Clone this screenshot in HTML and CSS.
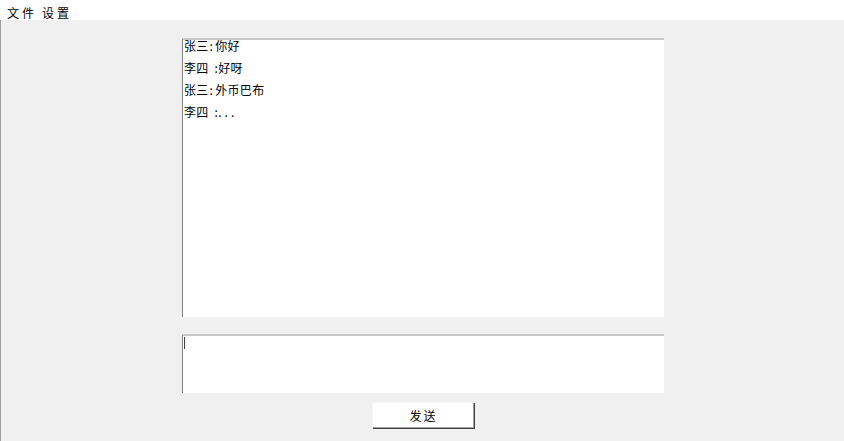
FILE: index.html
```html
<!DOCTYPE html>
<html lang="zh-CN">
<head>
    <meta charset="UTF-8">
    <meta name="viewport" content="width=device-width, initial-scale=1.0">
    <title>聊天</title>
    <link rel="stylesheet" href="styles.css">
</head>
<body>
    <div class="menubar">
        <span class="menu-item">文件</span>
        <span class="menu-item">设置</span>
    </div>
    <div class="window">
        <div class="chat-log">
            <div class="line">张三<span class="colon">:</span>你好</div>
            <div class="line">李四&nbsp; :好呀</div>
            <div class="line">张三<span class="colon">:</span>外币巴布</div>
            <div class="line">李四&nbsp; :<span class="dots">...</span></div>
        </div>
        <div class="chat-input"><span class="caret"></span></div>
        <button class="send-btn">发送</button>
    </div>
</body>
</html>
```

FILE: styles.css
```css
html, body {
    margin: 0;
    height: 100%;
}
body {
    font-family: "Noto Sans CJK SC", "Liberation Sans", sans-serif;
    font-size: 12px;
    color: #000;
    background-color: #f0f0f0;
    display: flex;
    flex-direction: column;
}
.menubar {
    height: 20px;
    background: #fff;
    display: flex;
    align-items: center;
    gap: 5px;
    padding-left: 7px;
    padding-top: 6px;
    box-sizing: border-box;
}
.menu-item {
    letter-spacing: 3px;
    line-height: 12px;
}
.window {
    flex: 1;
    border-left: 1px solid #a0a0a0;
    display: flex;
    flex-direction: column;
    align-items: center;
    padding-top: 18px;
    padding-left: 1px;
}
.chat-log {
    width: 480px;
    height: 277px;
    background: #fff;
    border-top: 2px solid #c8c8c8;
    border-left: 1px solid #828282;
    display: flex;
    flex-direction: column;
    gap: 10px;
    padding-left: 1px;
    box-sizing: content-box;
}
.line {
    line-height: 12px;
    letter-spacing: 0.3px;
}
.colon {
    padding: 0 2px 0 1px;
}
.dots {
    letter-spacing: 3px;
}
.chat-input {
    width: 480px;
    height: 56px;
    margin-top: 17px;
    background: #fff;
    border-top: 2px solid #c8c8c8;
    border-left: 1px solid #828282;
    padding-left: 1px;
    padding-top: 1px;
    box-sizing: content-box;
}
.caret {
    display: block;
    width: 1px;
    height: 12px;
    background: #404040;
}
.send-btn {
    margin-top: 9px;
    width: 102px;
    height: 26px;
    padding: 0;
    background: #fff;
    border: none;
    border-top: 1px solid #f8f8f8;
    border-left: 1px solid #f8f8f8;
    box-shadow: inset -1px -1px 0 #a0a0a0, 1px 1px 0 #404040;
    font-family: "Noto Sans CJK SC", sans-serif;
    font-size: 12px;
    letter-spacing: 2px;
    color: #000;
}
```
